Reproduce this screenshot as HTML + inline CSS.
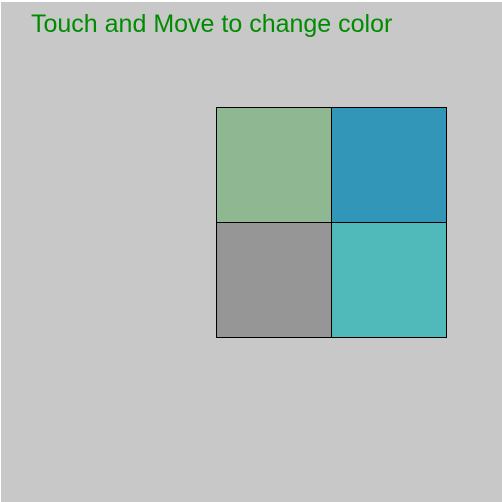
<html><head><style>
body{margin:0;background:#fff;width:502px;height:502px;overflow:hidden;position:relative}
#c{position:absolute;left:1px;top:2px;width:502px;height:500px;background:#c8c8c8}
#t{position:absolute;left:31px;top:10px;font:25px "Liberation Sans",sans-serif;color:#008c00;white-space:nowrap;letter-spacing:0px}
.s{position:absolute;width:114px;height:114px;border:1px solid #000;box-sizing:content-box}
</style></head><body>
<div id="c"></div>
<div id="t">Touch and Move to change color</div>
<div class="s" style="left:216px;top:107px;background:#8eb792"></div>
<div class="s" style="left:331px;top:107px;background:#3296b9"></div>
<div class="s" style="left:216px;top:222px;background:#969696"></div>
<div class="s" style="left:331px;top:222px;background:#50b9b9"></div>
</body></html>
